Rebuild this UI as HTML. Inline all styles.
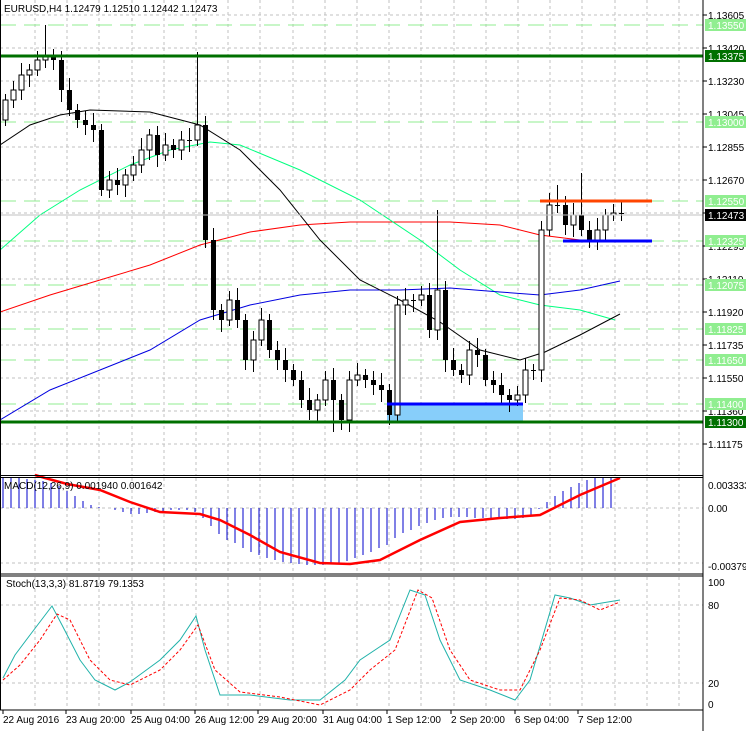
<!DOCTYPE html><html><head><meta charset="utf-8"><style>
body{margin:0;background:#fff;width:746px;height:731px;overflow:hidden;font-family:"Liberation Sans",sans-serif}
svg text{font-family:"Liberation Sans",sans-serif;font-size:10px}
</style></head><body>
<svg id="s" width="746" height="731" xmlns="http://www.w3.org/2000/svg"></svg>
<script>
var s=document.getElementById('s'),h='';
function L(x1,y1,x2,y2,c,w,d){h+='<line x1="'+x1+'" y1="'+y1+'" x2="'+x2+'" y2="'+y2+'" stroke="'+c+'" stroke-width="'+(w||1)+'"'+(d?' stroke-dasharray="'+d+'"':'')+' shape-rendering="crispEdges"/>';}
function R(x,y,w,hh,f,st){h+='<rect x="'+x+'" y="'+y+'" width="'+w+'" height="'+hh+'" fill="'+f+'"'+(st?' stroke="'+st+'"':'')+' shape-rendering="crispEdges"/>';}
function T(x,y,t,c,a){h+='<text x="'+x+'" y="'+y+'" fill="'+(c||'#000')+'"'+(a?' text-anchor="'+a+'"':'')+'>'+t+'</text>';}
function P(pts,c,w,d){h+='<polyline fill="none" stroke="'+c+'" stroke-width="'+(w||1)+'"'+(d?' stroke-dasharray="'+d+'"':'')+' points="'+pts.map(function(p){return p.join(',')}).join(' ')+'"/>';}
var X=703;
function Y(p){return 15+(1.13605-p)*17654;}
for(var gx=35;gx<X;gx+=32.2){L(Math.round(gx),0,Math.round(gx),475,'#c0c0c0',1,'3,3');L(Math.round(gx),478,Math.round(gx),573,'#c0c0c0',1,'3,3');L(Math.round(gx),577,Math.round(gx),709,'#c0c0c0',1,'3,3');}
var labs=[1.13605,1.1342,1.1323,1.13045,1.12855,1.1267,1.12485,1.12295,1.1211,1.1192,1.11735,1.1155,1.1136,1.11175];
labs.forEach(function(p){var y=Math.round(Y(p));L(0,y,X,y,'#c0c0c0',1,'3,3');L(X,y,X+4,y,'#000');T(708,y+4,p.toFixed(5));});
[[1.1355],[1.13],[1.1255],[1.12325],[1.12075],[1.11825],[1.1165],[1.114]].forEach(function(a){var y=Math.round(Y(a[0]));L(0,y,X,y,'#90ee90',1,'16,8');});
R(387,403,136,19,'#87cefa');
P([[0,312],[50,295],[100,280],[150,265],[200,245],[250,232],[300,225],[350,222],[400,222],[450,222],[500,225],[540,235],[580,240]],'#f00');
P([[0,250],[40,215],[80,190],[130,165],[170,150],[210,142],[240,145],[300,170],[360,200],[420,240],[460,270],[500,295],[540,305],[580,310],[615,320]],'#00ff7f');
P([[0,420],[50,390],[100,370],[150,350],[200,320],[250,305],[300,295],[350,290],[400,290],[450,288],[500,292],[540,295],[580,290],[620,281]],'#0000e0');
P([[0,145],[30,125],[60,115],[90,110],[150,112],[200,125],[240,150],[280,190],[320,240],[360,280],[400,300],[440,322],[480,350],[520,360],[545,352],[580,335],[620,314]],'#000');
var c=[100,90,75,70,60,55,60,90,110,120,125,130,190,180,185,175,165,150,135,155,145,150,140,140,125,240,310,320,300,320,360,340,320,350,360,370,380,400,410,400,380,400,420,380,375,380,385,390,415,305,300,300,295,330,290,360,370,375,350,355,380,385,395,400,395,370,370,230,205,205,225,215,230,240,230,215,213,213];
var o=[120];for(var i=1;i<c.length;i++)o.push(c[i-1]);
for(var i=0;i<c.length;i++){var x=5+i*8,op=o[i],cl=c[i],t=Math.min(op,cl),b=Math.max(op,cl);var hi=t-6-(i%3)*3,lo=b+6+(i%4)*2;
if(i==5)hi=25;if(i==24)hi=52;if(i==54)hi=210;if(i==48)lo=425;if(i==41)lo=432;if(i==69)hi=185;if(i==72)hi=173;
L(x+0.5,hi,x+0.5,lo,'#000');var bh=Math.max(b-t,1);
if(cl<op)R(x-2,t,5,bh,'#fff','#000');else R(x-2,t,5,bh,'#000');}
L(0,56,X,56,'#007000',3);L(0,422,X,422,'#007000',3);
L(387,404,523,404,'#0000ff',3);L(540,201,652,201,'#ff4500',3);L(563,241,652,241,'#0000ff',3);
L(0,215,X,215,'#c0c0c0');
function PL(p,bg,fg){var y=Math.round(Y(p));R(705,y-6,41,12,bg);T(708,y+4,p.toFixed(5),fg);}
PL(1.1355,'#90ee90','#fff');PL(1.13,'#90ee90','#fff');PL(1.1255,'#90ee90','#fff');PL(1.12325,'#90ee90','#fff');PL(1.12075,'#90ee90','#fff');PL(1.11825,'#90ee90','#fff');PL(1.1165,'#90ee90','#fff');PL(1.114,'#90ee90','#fff');
PL(1.13375,'#007000','#fff');PL(1.113,'#007000','#fff');PL(1.12473,'#000','#fff');
T(4,12,'EURUSD,H4  1.12479 1.12510 1.12442 1.12473');
L(0,508,X,508,'#c0c0c0',1,'3,3');L(0,563,X,563,'#c0c0c0',1,'3,3');
var hv=[34,32,30,29,28,27,25,22,17,12,7,3,1,0,-2,-4,-6,-6,-5,-4,-3,-2,-2,-2,-4,-10,-18,-26,-32,-35,-40,-44,-47,-50,-52,-54,-55,-56,-57,-57,-57,-56,-55,-53,-50,-47,-44,-40,-37,-30,-25,-22,-18,-15,-12,-10,-9,-9,-9,-10,-10,-10,-10,-11,-11,-10,-8,-1,6,12,17,21,25,28,30,31,31];
for(var i=0;i<hv.length;i++){var x=3+i*8;if(hv[i]!=0)L(x,508,x,Math.max(478,508-hv[i]),'#0000cc');}
P([[35,475],[45,478],[67,484],[100,490],[130,502],[160,512],[200,514],[220,520],[250,535],[280,552],[320,563],[350,564],[380,560],[420,540],[460,522],[500,518],[540,515],[580,495],[620,478]],'#f00',2.5);
T(4,489,'MACD(12,26,9) 0.001940 0.001642');
T(708,489,'0.003333');T(708,512,'0.00');T(708,570,'-0.003795');
L(0,605,X,605,'#c0c0c0',1,'3,3');L(0,683,X,683,'#c0c0c0',1,'3,3');
P([[3,678],[15,655],[30,635],[52,606],[62,625],[80,660],[95,680],[115,690],[130,682],[160,660],[180,640],[196,616],[205,650],[220,695],[250,695],[290,700],[320,700],[345,680],[360,660],[390,640],[410,590],[425,595],[440,640],[460,680],[490,690],[515,700],[530,680],[555,595],[570,598],[590,605],[620,600]],'#20b2aa');
P([[3,680],[20,665],[40,640],[57,614],[70,620],[90,660],[110,680],[130,685],[160,670],[180,650],[198,625],[215,670],[240,692],[280,697],[320,705],[350,690],[370,670],[395,650],[418,590],[432,598],[450,650],[470,680],[500,690],[520,690],[540,650],[560,598],[580,600],[600,610],[620,602]],'#f00',1,'3,2');
T(6,587,'Stoch(13,3,3) 81.8719 79.1353');
T(708,586,'100');T(708,609,'80');T(708,687,'20');T(708,708,'0');
L(X,0,X,731,'#000');L(0,475.5,X,475.5,'#000');L(0,477.5,X,477.5,'#000');L(0,574,X,574,'#000');L(0,576,X,576,'#000');L(0,710,X,710,'#000');L(0.5,0,0.5,710,'#000');
[3,66,131,195,258,323,387,451,515,578].forEach(function(x,i){L(x,710,x,714,'#000');T(x,723,['22 Aug 2016','23 Aug 20:00','25 Aug 04:00','26 Aug 12:00','29 Aug 20:00','31 Aug 04:00','1 Sep 12:00','2 Sep 20:00','6 Sep 04:00','7 Sep 12:00'][i]);});
s.innerHTML=h;
</script></body></html>
